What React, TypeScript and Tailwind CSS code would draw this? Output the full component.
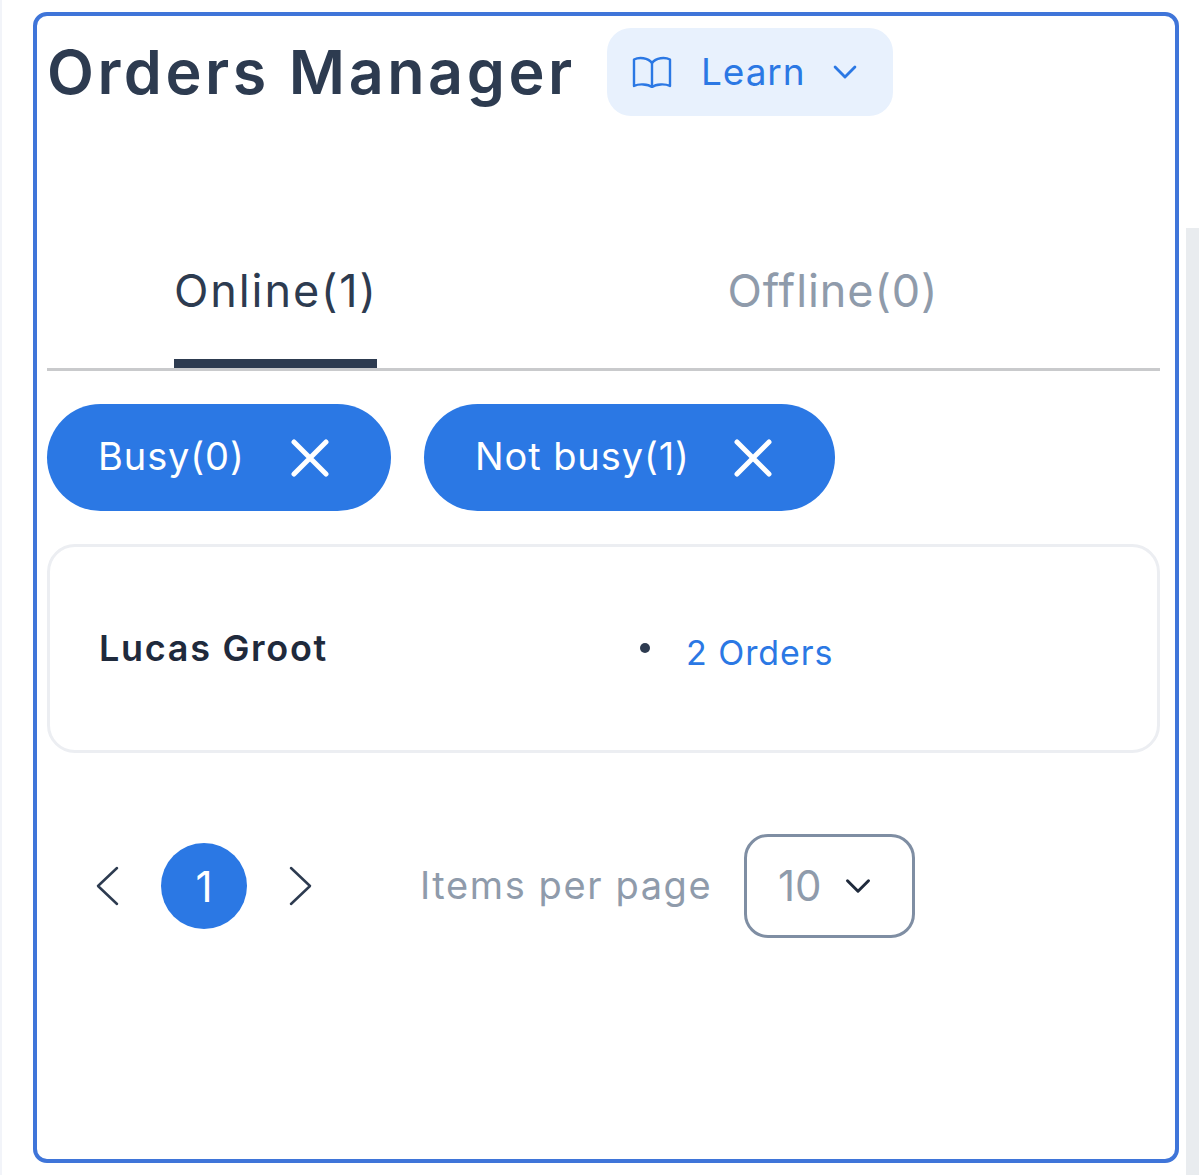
import React from "react";

const F = "font-['Inter','Liberation_Sans',sans-serif]";

function Chev({ d, className }: { d: string; className: string }) {
  return (
    <svg viewBox="0 0 24 24" fill="none" stroke="currentColor" strokeLinecap="round" strokeLinejoin="round" className={className}>
      <path d={d} />
    </svg>
  );
}

function Chip({ label, w, gap }: { label: string; w: string; gap: string }) {
  return (
    <div className={`flex h-[107px] items-center rounded-full bg-[#2b78e4] pl-[51px] text-[38px] tracking-[0.9px] text-white ${w}`}>
      <span className="-translate-y-[1px] whitespace-nowrap">{label}</span>
      <svg viewBox="0 0 38 38" fill="none" stroke="white" strokeWidth="5" strokeLinecap="round" className={`h-[38px] w-[38px] shrink-0 ${gap}`}>
        <path d="M3 3 35 35M35 3 3 35" />
      </svg>
    </div>
  );
}

export default function App() {
  return (
    <div className={`flex h-[1175px] w-[1200px] overflow-hidden bg-white ${F}`}>
      <div className="h-full w-[2px] bg-[#f2f4f9]" />
      <div className="ml-[31px] mt-[12px] flex h-[1151px] w-[1146px] shrink-0 flex-col rounded-[14px] border-4 border-[#3f75d9] pl-[10px] pr-[15px]">
        <div className="mt-[12px] flex items-center">
          <h1 className="w-[560px] whitespace-nowrap text-[61px] font-semibold leading-[88px] tracking-[3.550px] text-[#2d3b50]">Orders Manager</h1>
          <div className="flex h-[88px] w-[286px] items-center rounded-[24px] bg-[#e8f1fd] pl-[25px] text-[#2b78e4]">
            <svg viewBox="0 0 40 32" fill="none" stroke="currentColor" strokeWidth="2.4" strokeLinejoin="round" strokeLinecap="round" className="h-[32px] w-[40px]">
              <path d="M20 7C16 1.500 7 1 2 3.500V30C7 27.500 16 28 20 31C24 28 33 27.500 38 30V3.500C33 1 24 1.500 20 7Z" />
              <path d="M20 7V31" />
            </svg>
            <span className="ml-[29px] text-[37px] tracking-[0.9px]">Learn</span>
            <Chev d="M5 8.500 12 15.500 19 8.500" className="ml-[22px] h-[34px] w-[34px] [stroke-width:2]" />
          </div>
        </div>

        <div className="mt-[124px] grid grid-cols-2 border-b-[3px] border-[#c9cacc] text-[45px] leading-[60px]">
          <div className="pl-[127px]">
            <div className="flex h-[128px] w-[203px] flex-col justify-end gap-[38px] text-[#2d3b50]">
              <span className="whitespace-nowrap tracking-[1.9px]">Online(1)</span>
              <div className="h-[9px] w-[203px] bg-[#2d3b50]" />
            </div>
          </div>
          <div className="pl-[124px] pt-[21px] text-[#8f9bab]">
            <span className="whitespace-nowrap tracking-[0.9px]">Offline(0)</span>
          </div>
        </div>

        <div className="mt-[33px] flex gap-[33px]">
          <Chip label="Busy(0)" w="w-[344px]" gap="ml-[46px]" />
          <Chip label="Not busy(1)" w="w-[411px]" gap="ml-[44px]" />
        </div>

        <div className="mt-[33px] flex h-[209px] w-[1113px] items-center rounded-[28px] border-[3px] border-[#eceef2] pl-[49px]">
          <span className="w-[541px] -translate-y-[1px] whitespace-nowrap text-[36px] font-semibold tracking-[1.7px] text-[#1f2a3c]">Lucas Groot</span>
          <span className="h-[10px] w-[10px] -translate-y-[1px] rounded-full bg-[#2d3b50]" />
          <span className="ml-[36px] translate-y-[4px] whitespace-nowrap text-[34px] tracking-[0.95px] text-[#2b78e4]">2 Orders</span>
        </div>

        <div className="mt-[81px] flex items-center pl-[49px]">
          <svg viewBox="0 0 24 40" fill="none" stroke="#2d3b50" strokeWidth="2.500" strokeLinecap="round" strokeLinejoin="round" className="h-[40px] w-[24px]">
            <path d="M21 2 2 20 21 38" />
          </svg>
          <div className="ml-[41px] flex h-[86px] w-[86px] items-center justify-center rounded-full bg-[#2b78e4] text-[42px] text-white">1</div>
          <svg viewBox="0 0 24 40" fill="none" stroke="#2d3b50" strokeWidth="2.500" strokeLinecap="round" strokeLinejoin="round" className="ml-[42px] h-[40px] w-[24px]">
            <path d="M2 2 21 20 2 38" />
          </svg>
          <span className="ml-[107px] w-[324px] -translate-y-[1px] whitespace-nowrap text-[38px] tracking-[1.6px] text-[#8f9bab]">Items per page</span>
          <div className="flex h-[104px] w-[171px] items-center rounded-[24px] border-[3px] border-[#7f8ea3] pl-[31px]">
            <span className="-translate-y-[1px] text-[42px] text-[#8f9bab]">10</span>
            <Chev d="M5 8.500 12 15.500 19 8.500" className="ml-[18px] h-[36px] w-[36px] text-[#1f2a3c] [stroke-width:2]" />
          </div>
        </div>
      </div>
      <div className="ml-[7px] mt-[228px] h-[947px] w-[13px] bg-[#e9ecef]" />
    </div>
  );
}
